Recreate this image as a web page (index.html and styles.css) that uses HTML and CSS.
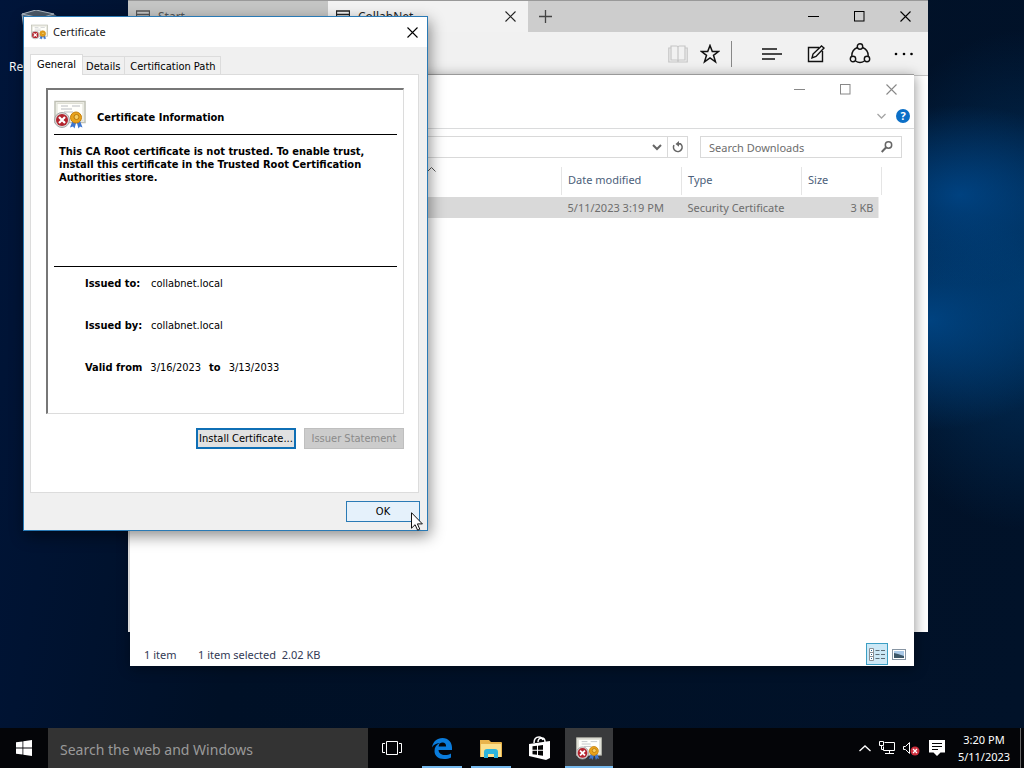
FILE: index.html
```
<!DOCTYPE html>
<html lang="en">
<head>
<meta charset="utf-8">
<title>Desktop</title>
<link rel="stylesheet" href="styles.css">
</head>
<body>
<svg class="defs" aria-hidden="true">
  <symbol id="cert" viewBox="0 0 32 28">
    <rect x="1" y="1" width="30" height="21" fill="#f7f7f1" stroke="#bfc0b4" stroke-width="1.5"/>
    <rect x="3" y="3" width="26" height="17" fill="#fffffb" stroke="#dedfd4"/>
    <path d="M7 5.500h7M18 5.500h8M7 8.500h11M10 11.500h9" stroke="#b9bcc0"/>
    <path d="M19 19l-3 8 3-1 1.500 2 2-7 2 7 1.500-2 2.500 1-3-8z" fill="#3d76cf"/>
    <circle cx="22" cy="17" r="5.500" fill="#e9a31b" stroke="#c47f0c"/>
    <circle cx="22.500" cy="16.500" r="2.500" fill="#f5cd62" stroke="#b9780d"/>
    <circle cx="8" cy="19.500" r="7.500" fill="#d8d8d8" stroke="#a6a6a6"/>
    <circle cx="8" cy="19.500" r="6" fill="#b3232d"/>
    <path d="M5 16.500l6 6M11 16.500l-6 6" stroke="#fff" stroke-width="2.200"/>
  </symbol>
  <symbol id="min" viewBox="0 0 11 11"><path d="M0 5.500h11" stroke="currentColor"/></symbol>
  <symbol id="max" viewBox="0 0 11 11"><rect x=".5" y=".5" width="9.500" height="9.500" fill="none" stroke="currentColor"/></symbol>
  <symbol id="close" viewBox="0 0 11 11"><path d="M.5 .5l10 10M10.500 .5l-10 10" stroke="currentColor" stroke-width="1.100"/></symbol>
  <symbol id="page" viewBox="0 0 14 14"><path d="M.5 1h13v12.500H.5zM.5 4.500h13" fill="none" stroke="currentColor" stroke-width="1.300"/></symbol>
</svg>

<main class="desktop">
  <div class="bin">
    <svg width="40" height="46" viewBox="0 0 40 46"><path d="M2 4L16 0l18 4 4 3-5 36-10 3-16-4z" fill="#7b8997" fill-opacity=".75"/><path d="M2 4L16 0l18 4-14 4z" fill="#4c5a69" stroke="#aeb9c4"/><path d="M2 4l5 38" stroke="#aeb9c4"/></svg>
    <span>Re</span>
  </div>

  <section class="window browser">
    <header class="tabbar">
      <div class="tab"><svg width="14" height="14"><use href="#page"/></svg><span>Start</span></div>
      <div class="tab active"><svg width="14" height="14"><use href="#page"/></svg><span>CollabNet</span><button aria-label="Close tab"><svg width="11" height="11"><use href="#close"/></svg></button></div>
      <button class="newtab" aria-label="New tab"><svg width="13" height="13" viewBox="0 0 13 13"><path d="M6.500 0v13M0 6.500h13" stroke="#444" stroke-width="1.300"/></svg></button>
      <div class="controls">
        <button aria-label="Minimize"><svg width="11" height="11"><use href="#min"/></svg></button>
        <button aria-label="Maximize"><svg width="11" height="11"><use href="#max"/></svg></button>
        <button aria-label="Close"><svg width="11" height="11"><use href="#close"/></svg></button>
      </div>
    </header>
    <nav class="toolbar">
      <button class="book" aria-label="Reading view"><svg width="20" height="18" viewBox="0 0 20 18" fill="none" stroke="#c6c6c6" stroke-width="1.200"><path d="M3 1h5.500Q10 1 10 2.500 10 1 11.500 1H17v14h-5.500q-1.500 0-1.500 1.500Q10 15 8.500 15H3zM10 2.500v14M3 3H.8v14H19.200V3H17"/></svg></button>
      <button class="star" aria-label="Favorites"><svg width="20" height="20" viewBox="0 0 20 20"><path d="M10 1.500l2.300 6h6.200l-5 3.800 2 6.500L10 14l-5.500 3.800 2-6.500-5-3.800h6.200z" fill="none" stroke="#111" stroke-width="1.500"/></svg></button>
      <i class="divider"></i>
      <button aria-label="Hub"><svg width="20" height="12" viewBox="0 0 20 12"><path d="M0 1h15M0 6h20M0 11h13" stroke="#111" stroke-width="1.300"/></svg></button>
      <button aria-label="Make a web note"><svg width="18" height="18" viewBox="0 0 18 18" fill="none" stroke="#111" stroke-width="1.400"><path d="M12 2.500H1.500v14h14V6M5 13l1-4 8.500-8 2.500 2-8 8.500z"/></svg></button>
      <button aria-label="Share"><svg width="22" height="21" viewBox="0 0 22 21" fill="none" stroke="#111" stroke-width="1.400"><circle cx="11" cy="3.500" r="2.700"/><circle cx="4" cy="16" r="2.700"/><circle cx="18" cy="16" r="2.700"/><path d="M8.400 4.500Q2.500 7 2.800 13.300M13.600 4.500Q19.500 7 19.200 13.300M6.500 18q4.500 3 9 0"/></svg></button>
      <button aria-label="More"><svg width="20" height="4" viewBox="0 0 20 4"><circle cx="2" cy="2" r="1.300"/><circle cx="10" cy="2" r="1.300"/><circle cx="17.500" cy="2" r="1.300"/></svg></button>
    </nav>
  </section>

  <section class="window explorer">
    <header class="controls">
      <button aria-label="Minimize"><svg width="11" height="11"><use href="#min"/></svg></button>
      <button aria-label="Maximize"><svg width="11" height="11"><use href="#max"/></svg></button>
      <button aria-label="Close"><svg width="11" height="11"><use href="#close"/></svg></button>
    </header>
    <div class="ribbon">
      <button aria-label="Expand ribbon"><svg width="9" height="6" viewBox="0 0 9 6"><path d="M.5 1l4 4 4-4" fill="none" stroke="#a5a5a5" stroke-width="1.300"/></svg></button>
      <button class="help" aria-label="Help">?</button>
    </div>
    <div class="address">
      <div class="path">
        <button aria-label="Previous locations"><svg width="10" height="7" viewBox="0 0 10 7"><path d="M1 1l4 4 4-4" fill="none" stroke="#666" stroke-width="2"/></svg></button>
        <button class="refresh" aria-label="Refresh"><svg width="12" height="12" viewBox="0 0 12 12"><path d="M2 4.200a4.300 4.300 0 1 0 6.500-1.300H5" fill="none" stroke="#666" stroke-width="1.600"/><path d="M7 0L3.500 2.900 7 5.800z" fill="#666"/></svg></button>
      </div>
      <label class="find"><input type="text" placeholder="Search Downloads" aria-label="Search Downloads"><svg width="12" height="12" viewBox="0 0 12 12"><circle cx="7.500" cy="4" r="3.200" fill="none" stroke="#666" stroke-width="1.500"/><path d="M5 6.500L.7 11" stroke="#666" stroke-width="2"/></svg></label>
    </div>
    <table class="files">
      <colgroup><col><col class="wide"><col class="wide"><col class="size"></colgroup>
      <thead><tr><th aria-label="Name"><svg class="sort" width="9" height="5" viewBox="0 0 9 5"><path d="M.5 4.500l4-4 4 4" fill="none" stroke="#555"/></svg></th><th>Date modified</th><th>Type</th><th>Size</th></tr></thead>
      <tbody><tr><td></td><td>5/11/2023 3:19 PM</td><td>Security Certificate</td><td class="num">3 KB</td></tr></tbody>
    </table>
    <footer class="status">
      <span class="count">1 item</span><span>1 item selected&nbsp; 2.02 KB</span>
      <button class="view on" aria-label="Details view"><svg width="16" height="13" viewBox="0 0 16 13"><path d="M.5 .5h4v12h-4zM.5 4.500h4M.5 8.500h4" fill="#fff" stroke="#8a8f94"/><path d="M2 2.500h1M2 6.500h1M2 10.500h1" stroke="#24618c"/><path d="M6.500 2.500h4M12 2.500h4M6.500 6.500h4M12 6.500h4M6.500 10.500h4M12 10.500h4" stroke="#5c6c76"/></svg></button>
      <button class="view" aria-label="Large icons"><svg width="14" height="11" viewBox="0 0 14 11"><rect x=".5" y=".5" width="13" height="10" fill="#fff" stroke="#8795a3"/><rect x="2" y="2" width="10" height="7" fill="#a9c8e6"/><path d="M2 4l4 1 6 2v2H2z" fill="#3c5667"/></svg></button>
    </footer>
  </section>

  <section class="window dialog" role="dialog" aria-labelledby="dlg">
    <header class="title">
      <svg width="17" height="16"><use href="#cert"/></svg>
      <h1 id="dlg">Certificate</h1>
      <button aria-label="Close"><svg width="11" height="11"><use href="#close"/></svg></button>
    </header>
    <div class="pages">
      <div class="tabs" role="tablist">
        <button role="tab" class="current" aria-selected="true">General</button>
        <button role="tab">Details</button>
        <button role="tab">Certification Path</button>
      </div>
      <div class="panel">
        <div class="sheet">
          <div class="heading"><svg width="32" height="29"><use href="#cert"/></svg><h2>Certificate Information</h2></div>
          <p class="notice">This CA Root certificate is not trusted. To enable trust, install this certificate in the Trusted Root Certification Authorities store.</p>
          <div class="facts">
            <p><b>Issued to:</b><span>collabnet.local</span></p>
            <p><b>Issued by:</b><span>collabnet.local</span></p>
            <p class="valid"><b>Valid from</b><span>3/16/2023</span><b>to</b><span>3/13/2033</span></p>
          </div>
        </div>
        <div class="actions">
          <button class="push focus">Install Certificate...</button>
          <button class="push" disabled>Issuer Statement</button>
        </div>
      </div>
      <div class="bottom"><button class="push ok">OK</button></div>
    </div>
  </section>

  <svg class="cursor" width="12" height="19" viewBox="0 0 12 19"><path d="M.5 .7v15.500l3.600-3.500 2.500 5.500 2.200-1-2.400-5.300h5z" fill="#fff" stroke="#111"/></svg>
</main>

<footer class="taskbar">
  <button class="app start" aria-label="Start"><svg width="16" height="16" viewBox="0 0 16 16"><path d="M0 2.300L6.500 1.400v6.200H0zM7.300 1.300L16 0v7.600H7.300zM0 8.400h6.500v6.200L0 13.700zM7.300 8.400H16V16l-8.700-1.300z" fill="#fff"/></svg></button>
  <input class="search" type="text" placeholder="Search the web and Windows" aria-label="Search the web and Windows">
  <button class="app" aria-label="Task view"><svg width="20" height="16" viewBox="0 0 20 16"><path d="M4.500 1.500h11v13h-11zM3 3.500H.5v9H3M17 3.500h2.500v9H17" fill="none" stroke="#fff"/></svg></button>
  <div class="apps">
    <button class="app open" aria-label="Edge"><svg width="20" height="21" viewBox="0 0 20 21"><path d="M0 9.500C1 3.500 5 0 10.500 0 16.500 0 20 4.500 20 9.500V12H6.500c.3 3.300 3 5 6.500 5 2.300 0 4.200-.6 6-1.600v4.100C17 20.500 14.500 21 12 21 6 21 2.500 17.600 2.500 13c0-3.800 2.200-6.600 5.500-8-4.200.2-6.700 2.200-8 4.500zM6.600 8.500h7.500c0-2.700-1.300-4-3.500-4-2.300 0-3.700 1.600-4 4z" fill="#0a7cdc"/></svg></button>
    <button class="app open" aria-label="File Explorer"><svg width="22" height="19" viewBox="0 0 22 19"><path d="M0 1h9l2 2h10q1 0 1 1v14H0z" fill="#e9b44c"/><path d="M1 5h20v13H1z" fill="#fbe08d"/><path d="M4 19v-6q0-3 3-3h8q3 0 3 3v6h-4v-4H8v4z" fill="#2db4dc"/></svg></button>
    <button class="app" aria-label="Store"><svg width="22" height="24" viewBox="0 0 22 24"><path d="M5 7q0-6 5-6 3 0 4 3M9 6q0-4 4-4 3 0 3 4" fill="none" stroke="#fff" stroke-width="1.500"/><path d="M0 8l21-3v17l-4 2L0 20z" fill="#fff"/><path d="M3.500 10.300l4.500-.5v4H3.500zM9 9.700l5-.6v4.700H9zM3.500 14.800H8v4l-4.500-.6zM9 14.800h5v4.900l-5-.7z" fill="#050505"/></svg></button>
    <button class="app open running" aria-label="Certificate"><svg width="26" height="23"><use href="#cert"/></svg></button>
  </div>
  <div class="tray">
    <svg width="12" height="7" viewBox="0 0 12 7"><path d="M.5 6L6 1l5.500 5" fill="none" stroke="#fff" stroke-width="1.300"/></svg>
    <svg width="16" height="14" viewBox="0 0 16 14" fill="none" stroke="#fff"><path d="M5.500 1.500h10v8h-11v-4M10.500 9.500v3M6 12.500h9M.5 .5h4v4h-4zM2.500 4.500v4h2"/></svg>
    <svg width="18" height="15" viewBox="0 0 18 15"><path d="M.5 5.500h2l4-4v11l-4-4h-2z" fill="none" stroke="#fff"/><circle cx="12" cy="10" r="4.500" fill="#cf2f3d"/><path d="M10 8l4 4M14 8l-4 4" stroke="#fff" stroke-width="1.200"/></svg>
    <svg width="16" height="16" viewBox="0 0 16 16"><path d="M0 0h16v12.500h-4.500L8 16l-3.500-3.500H0z" fill="#fff"/><path d="M3 3.500h10M3 6.500h10M3 9.500h6" stroke="#050505"/></svg>
    <div class="clock"><time>3:20 PM</time><time>5/11/2023</time></div>
  </div>
</footer>
</body>
</html>
```
FILE: styles.css
```
* { box-sizing: border-box; }

body {
  margin: 0;
  min-height: 100vh;
  display: flex;
  flex-direction: column;
  overflow: hidden;
  background: #020c1e;
  font: 11px/17px "Noto Sans", "Open Sans", sans-serif;
  color: #333;
}

button {
  padding: 0;
  border: 0;
  background: none;
  font: inherit;
  color: inherit;
  display: flex;
  align-items: center;
  justify-content: center;
}

input { font: inherit; color: inherit; border: 0; background: none; padding: 0; min-width: 0; }
svg { flex: none; display: block; }
.defs { display: none; }

.desktop {
  position: relative;
  flex: 1;
  background:
    radial-gradient(ellipse 140px 90px at 960px 195px, rgba(0, 71, 138, .85) 0%, rgba(0, 71, 138, 0) 100%),
    radial-gradient(ellipse 150px 110px at 930px 320px, rgba(0, 72, 138, .85) 0%, rgba(0, 66, 126, 0) 100%),
    radial-gradient(ellipse 180px 250px at 1024px 280px, #003565 0%, rgba(0, 48, 94, 0) 100%),
    linear-gradient(100deg, #00153a 0%, #001026 30%, #011229 100%);
}

.bin {
  position: absolute;
  left: 9px;
  top: 10px;
  display: flex;
  flex-direction: column;
  gap: 2px;
  color: #fff;
  font-size: 12px;
}
.bin svg { margin-left: 11px; }

.window { position: absolute; display: flex; flex-direction: column; background: #fff; }
.controls { display: flex; }
.controls button { width: 46px; }

.browser { left: 128px; top: 0; width: 800px; height: 632px; }
.tabbar { display: flex; height: 32px; background: #cdcdcd; border-top: 1px solid #999; color: #222; }
.tabbar .controls { margin-left: auto; color: #000; }
.tab { display: flex; align-items: center; gap: 8px; width: 200px; padding: 0 8px; color: #555; background: #c4c5c4; font-size: 12px; }
.tab.active { background: #f2f2f2; color: #222; }
.tab button { margin-left: auto; width: 20px; height: 20px; }
.newtab { width: 34px; }
.toolbar {
  display: flex;
  align-items: center;
  height: 44px;
  padding-right: 2px;
  background: #f1f1f1;
  border-bottom: 1px solid #c4c4c4;
  justify-content: flex-end;
}
.toolbar button { width: 44px; height: 32px; }
.toolbar .book, .toolbar .star { width: 32px; }
.divider { width: 1px; height: 26px; background: #888; margin: 0 18px 0 5px; }

.explorer {
  left: 130px;
  top: 74px;
  width: 784px;
  height: 592px;
  border-top: 1px solid #999;
  box-shadow: 1px 2px 12px rgba(0, 0, 0, .4);
}
.explorer .controls { justify-content: flex-end; height: 28px; color: #888; }
.ribbon {
  display: flex;
  justify-content: flex-end;
  align-items: center;
  gap: 10px;
  height: 26px;
  padding-right: 4px;
  border-bottom: 1px solid #dadbdc;
}
.help { width: 14px; height: 14px; border-radius: 50%; background: #0b6fc7; color: #fff; font-weight: 700; line-height: 14px; }
.address { display: flex; gap: 12px; padding: 7px 12px 9px; }
.path, .find { display: flex; height: 22px; border: 1px solid #d9d9d9; }
.path { flex: 1; justify-content: flex-end; }
.path button { width: 20px; }
.path .refresh { border-left: 1px solid #d9d9d9; }
.find { width: 202px; align-items: center; padding: 0 8px; }
.find input { flex: 1; }
.find input::placeholder { color: #6d6d6d; opacity: 1; }

.files { width: 752px; table-layout: fixed; border-collapse: collapse; }
.wide { width: 120px; }
.size { width: 80px; }
.files th {
  position: relative;
  height: 28px;
  padding: 0 6px 4px;
  border-right: 1px solid #e5e5e5;
  font-weight: 400;
  text-align: left;
  color: #4c607a;
}
.files td { height: 21px; padding: 0 6px; color: #6d6d6d; white-space: nowrap; }
.files tbody tr {
  background: linear-gradient(#d9d9d9, #d9d9d9) no-repeat 0 0 / calc(100% - 4px) 100%;
}
.files tbody::before { content: ""; display: block; height: 2px; }
.files .num { text-align: right; padding-right: 8px; }
.sort { position: absolute; left: 297px; top: 0; }

.status { display: flex; align-items: center; margin-top: auto; height: 24px; padding: 0 4px 0 14px; color: #333a55; }
.count { width: 54px; }
.view { width: 22px; height: 22px; }
.view.on { margin-left: auto; background: #cce8f6; border: 1px solid #3c9fc4; }

.dialog {
  left: 23px;
  top: 16px;
  width: 405px;
  height: 515px;
  border: 1px solid #2a7ab5;
  background: #f0f0f0;
  box-shadow: 2px 5px 14px rgba(0, 0, 0, .45);
  color: #000;
  font: 11px/13px "DejaVu Sans Condensed", "DejaVu Sans", sans-serif;
}
.title { display: flex; align-items: center; gap: 5px; height: 30px; background: #fff; padding: 0 0 0 7px; }
.title h1 { margin: 0; font: 11px/16px "Noto Sans", "Open Sans", sans-serif; color: #222; }
.title button { margin-left: auto; width: 30px; height: 30px; }
.pages { flex: 1; display: flex; flex-direction: column; padding: 7px 8px 8px 6px; }
.tabs { display: flex; align-items: flex-end; height: 20px; }
.tabs button { height: 18px; padding: 1px 4px 0 3px; border: 1px solid #dcdcdc; border-width: 1px 1px 0 0; white-space: nowrap; }
.tabs button:last-child { padding-left: 5px; }
.tabs .current {
  height: 21px;
  margin-bottom: -1px;
  padding: 0 6px 2px;
  background: #fff;
  border-left-width: 1px;
  z-index: 1;
}
.panel { flex: 1; display: flex; flex-direction: column; gap: 14px; background: #fff; border: 1px solid #dcdcdc; padding: 13px 14px 0 15px; }
.sheet {
  height: 326px;
  padding: 10px 6px;
  border: 1px solid #dcdcdc;
  border-top: 2px solid #777;
  border-left: 2px solid #777;
}
.heading { display: flex; align-items: center; gap: 11px; height: 35px; padding-bottom: 6px; border-bottom: 1px solid #000; }
.heading h2 { margin: 0; padding-top: 6px; font: inherit; font-weight: 700; }
.notice { margin: 0; height: 131px; padding: 10px 0 0 5px; font-weight: 700; }
.facts { display: flex; flex-direction: column; gap: 29px; padding: 10px 0 0 31px; border-top: 1px solid #000; }
.facts p { display: flex; margin: 0; }
.facts b { width: 66px; }
.facts .valid { gap: 8px; }
.valid b { width: auto; }
.actions { display: flex; justify-content: flex-end; gap: 8px; }
.push { width: 100px; height: 21px; white-space: nowrap; background: #e1e1e1; border: 1px solid #adadad; }
.push.focus { border: 2px solid #0f6fb5; }
.push:disabled { background: #ccc; border-color: #bfbfbf; color: #8a8a8a; }
.push.ok { width: 74px; background: #e5f1fb; border-color: #2a7ab5; }
.bottom { display: flex; justify-content: flex-end; padding-top: 8px; margin-right: -1px; }

.cursor { position: absolute; left: 411px; top: 512px; }

.taskbar { display: flex; height: 40px; background: #040508; color: #fff; }
.app { width: 48px; height: 40px; }
.search { width: 320px; padding: 2px 0 0 12px; background: #333; font-size: 14px; }
.search::placeholder { color: #9a9a9a; opacity: 1; }
.apps { display: flex; gap: 1px; padding-left: 2px; }
.open { background: linear-gradient(#76b9ed, #76b9ed) no-repeat center bottom / 40px 2px; }
.running { background-color: #393a3c; background-size: 100% 2px; }
.tray { display: flex; align-items: center; margin-left: auto; padding-right: 3px; }
.tray svg + svg { margin-left: 8px; }
.clock {
  display: flex;
  flex-direction: column;
  justify-content: center;
  align-items: center;
  align-self: stretch;
  width: 76px;
  padding-left: 3px;
  border-right: 1px solid #666;
}
```
